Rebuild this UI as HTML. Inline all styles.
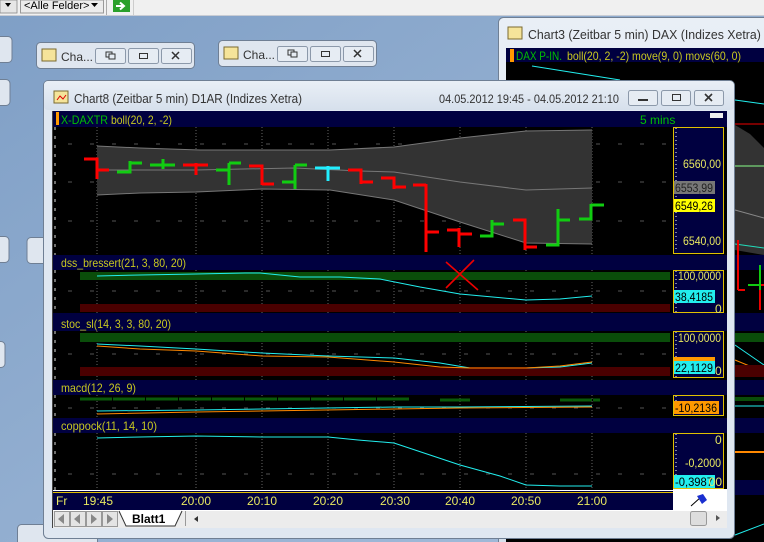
<!DOCTYPE html>
<html><head><meta charset="utf-8"><style>
html,body{margin:0;padding:0;width:764px;height:542px;overflow:hidden;background:#8eabcf}
svg{display:block}
text{font-family:"Liberation Sans",sans-serif}
</style></head><body>
<svg width="764" height="542" viewBox="0 0 764 542" xmlns="http://www.w3.org/2000/svg">
<defs>
<linearGradient id="desk" x1="0" y1="0" x2="1" y2="1"><stop offset="0" stop-color="#7f9fc6"/><stop offset="1" stop-color="#a6bedb"/></linearGradient>
<linearGradient id="tb" x1="0" y1="0" x2="0" y2="1"><stop offset="0" stop-color="#e9eff6"/><stop offset="1" stop-color="#d6e0ec"/></linearGradient>
</defs>
<rect width="764" height="542" fill="url(#desk)"/>
<rect x="0" y="0" width="764" height="15" fill="#f0f0f0"/>
<rect x="0" y="15" width="764" height="1" fill="#c8ccd4"/>
<rect x="0" y="0" width="17" height="13" fill="#e6e6e6" stroke="#888" stroke-width="0.8"/>
<path d="M5 3 l6 0 l-3 4z" fill="#000"/>
<rect x="20.5" y="0" width="83" height="13" fill="#ececec" stroke="#999"/>
<text x="24" y="9" font-size="11" fill="#000">&lt;Alle Felder&gt;</text>
<path d="M91 3 l7 0 l-3.5 4z" fill="#000"/>
<rect x="106" y="0" width="1" height="15" fill="#aaa"/>
<rect x="113" y="0" width="17" height="12" fill="#2aa02a"/>
<path d="M116 6 h7 M120 2.5 l4 3.5 l-4 3.5" stroke="#fff" stroke-width="2" fill="none"/>
<rect x="133" y="0" width="1" height="15" fill="#ccc"/>

<g fill="#dfe6ef" stroke="#6f7f94">
<rect x="-5" y="36.5" width="17" height="26" rx="4"/>
<rect x="-5" y="79.5" width="15" height="26" rx="4"/>
<rect x="-5" y="236.5" width="14" height="26" rx="4"/>
<rect x="-5" y="341.5" width="10" height="26" rx="4"/>
<rect x="27" y="237.5" width="20" height="26" rx="4"/>
<rect x="17.5" y="524.5" width="80" height="26" rx="4"/>
</g>
<g>
<rect x="36.5" y="42.5" width="158" height="26" rx="4" fill="#dfe6ef" stroke="#6f7f94"/>
<rect x="42" y="49" width="14" height="12" fill="#f5e49a" stroke="#7a6a30"/>
<text x="61" y="61" font-size="12" fill="#333">Cha...</text>
<rect x="95.5" y="48.5" width="30" height="15" rx="2" fill="#e6ecf3" stroke="#8c99aa"/>
<rect x="128.5" y="48.5" width="30" height="15" rx="2" fill="#e6ecf3" stroke="#8c99aa"/>
<rect x="161.5" y="48.5" width="30" height="15" rx="2" fill="#e6ecf3" stroke="#8c99aa"/>
<rect x="106" y="52" width="6" height="5" fill="none" stroke="#333"/><rect x="109" y="54" width="6" height="5" fill="#e6ecf3" stroke="#333"/>
<rect x="139.5" y="53.5" width="8" height="5" fill="none" stroke="#333"/>
<path d="M172 52 l7 7 M179 52 l-7 7" stroke="#333" stroke-width="1.5"/>
</g>
<g>
<rect x="218.5" y="40.5" width="158" height="26" rx="4" fill="#dfe6ef" stroke="#6f7f94"/>
<rect x="224" y="47" width="14" height="12" fill="#f5e49a" stroke="#7a6a30"/>
<text x="243" y="59" font-size="12" fill="#333">Cha...</text>
<rect x="277.5" y="46.5" width="30" height="15" rx="2" fill="#e6ecf3" stroke="#8c99aa"/>
<rect x="310.5" y="46.5" width="30" height="15" rx="2" fill="#e6ecf3" stroke="#8c99aa"/>
<rect x="343.5" y="46.5" width="30" height="15" rx="2" fill="#e6ecf3" stroke="#8c99aa"/>
<rect x="288" y="50" width="6" height="5" fill="none" stroke="#333"/><rect x="291" y="52" width="6" height="5" fill="#e6ecf3" stroke="#333"/>
<rect x="321.5" y="51.5" width="8" height="5" fill="none" stroke="#333"/>
<path d="M354 50 l7 7 M361 50 l-7 7" stroke="#333" stroke-width="1.5"/>
</g>

<rect x="498.5" y="17.5" width="270" height="530" rx="5" fill="url(#tb)" stroke="#6f7f94"/>
<rect x="508" y="27" width="14" height="12" fill="#f5e49a" stroke="#7a6a30"/>
<text x="528" y="39" font-size="12.5" fill="#333" textLength="250" lengthAdjust="spacingAndGlyphs">Chart3 (Zeitbar 5 min)  DAX (Indizes Xetra) 04</text>
<rect x="506" y="48" width="258" height="494" fill="#000"/>
<rect x="506" y="48" width="258" height="14" fill="#000040"/>
<rect x="510" y="49" width="4" height="13" fill="#f90"/>
<text x="516" y="60" font-size="12" fill="#00c000" textLength="46" lengthAdjust="spacingAndGlyphs">DAX P-IN.</text>
<text x="567" y="60" font-size="12" fill="#c8c820" textLength="174" lengthAdjust="spacingAndGlyphs">boll(20, 2, -2) move(9, 0) movs(60, 0)</text>
<path d="M532 66 L620 80" stroke="#2ee" stroke-width="1"/>
<rect x="735" y="80" width="29" height="462" fill="#000"/>
<path d="M735 100 L764 104" stroke="#2ee"/>
<path d="M735 124 H764" stroke="#e00"/>
<path d="M735 125 L750 134 L764 148 V255 L735 250Z" fill="#333"/>
<path d="M735 166 H764" stroke="#8f8"/>
<path d="M735 210 L764 218" stroke="#888"/>
<path d="M735 244 L764 248" stroke="#2db"/>
<rect x="735" y="255" width="29" height="15" fill="#000040"/>
<path d="M738 240 V290 M738 290 H745 M760 270 V310 M752 285 H764" stroke="#e00" stroke-width="2"/>
<path d="M760 265 V290 M748 285 H760" stroke="#1c1" stroke-width="2"/>
<rect x="735" y="313" width="29" height="18" fill="#000040"/>
<rect x="735" y="333" width="29" height="9" fill="#0a4d0a"/>
<path d="M735 345 L764 365" stroke="#2ee"/><path d="M735 360 L764 372" stroke="#f80"/>
<rect x="735" y="365" width="29" height="12" fill="#4a0000"/>
<rect x="735" y="380" width="29" height="15" fill="#000040"/>
<rect x="735" y="397" width="29" height="4" fill="#0a4d0a"/>
<path d="M735 406 H764" stroke="#2ee"/>
<rect x="735" y="418" width="29" height="15" fill="#000040"/>
<path d="M735 452 H764" stroke="#f80" stroke-width="2"/>
<rect x="735" y="480" width="29" height="15" fill="#000040"/>
<path d="M735 535 L764 524" stroke="#2ee"/>

<rect x="43.5" y="80.5" width="691" height="458" rx="5" fill="#dfe7f1" stroke="#6f7f94"/>
<rect x="44" y="81" width="690" height="29" rx="4" fill="url(#tb)"/>
<rect x="54" y="91" width="14" height="12" fill="#f5e49a" stroke="#7a6a30"/>
<path d="M57 100 l3-4 l3 3 l3-4" stroke="#d00" fill="none"/>
<text x="74" y="103" font-size="12.5" fill="#333" textLength="228" lengthAdjust="spacingAndGlyphs">Chart8 (Zeitbar 5 min)  D1AR (Indizes Xetra)</text>
<text x="439" y="103" font-size="12" fill="#333" textLength="180" lengthAdjust="spacingAndGlyphs">04.05.2012 19:45 - 04.05.2012 21:10</text>
<rect x="628.5" y="90.5" width="29" height="15" rx="2" fill="#e6ecf3" stroke="#8c99aa"/>
<rect x="661.5" y="90.5" width="29" height="15" rx="2" fill="#e6ecf3" stroke="#8c99aa"/>
<rect x="694.5" y="90.5" width="29" height="15" rx="2" fill="#e6ecf3" stroke="#8c99aa"/>
<rect x="638" y="99" width="10" height="2" fill="#333"/>
<rect x="672.5" y="94.5" width="8" height="6" fill="none" stroke="#333"/>
<path d="M705 94 l7 7 M712 94 l-7 7" stroke="#333" stroke-width="1.6"/>

<rect x="52" y="111" width="675" height="417" fill="#000"/>
<rect x="52" y="111" width="1" height="417" fill="#444"/>
<rect x="53" y="111" width="674" height="16" fill="#000040"/>
<rect x="56" y="112" width="3" height="13" fill="#f90"/>
<text x="61" y="124" font-size="12" fill="#00c000" textLength="47" lengthAdjust="spacingAndGlyphs">X-DAXTR</text>
<text x="111" y="124" font-size="12" fill="#c8c820" textLength="61" lengthAdjust="spacingAndGlyphs">boll(20, 2, -2)</text>
<text x="640" y="124" font-size="12" fill="#00c000">5 mins</text>
<rect x="710" y="113" width="13" height="5" fill="#eee"/>
<rect x="53" y="255" width="674" height="15" fill="#000040"/>
<text x="61" y="267" font-size="12" fill="#c8c820" textLength="125" lengthAdjust="spacingAndGlyphs">dss_bressert(21, 3, 80, 20)</text>
<rect x="53" y="313" width="674" height="18" fill="#000040"/>
<text x="61" y="328" font-size="12" fill="#c8c820" textLength="110" lengthAdjust="spacingAndGlyphs">stoc_sl(14, 3, 3, 80, 20)</text>
<rect x="53" y="380" width="674" height="15" fill="#000040"/>
<text x="61" y="392" font-size="12" fill="#c8c820" textLength="75" lengthAdjust="spacingAndGlyphs">macd(12, 26, 9)</text>
<rect x="53" y="418" width="674" height="15" fill="#000040"/>
<text x="61" y="430" font-size="12" fill="#c8c820" textLength="96" lengthAdjust="spacingAndGlyphs">coppock(11, 14, 10)</text>

<g stroke="#666" stroke-dasharray="1,2">
<path d="M97 127V255 M196 127V255 M262 127V255 M328 127V255 M394 127V255 M460 127V255 M526 127V255 M592 127V255"/>
<path d="M97 270V313 M196 270V313 M262 270V313 M328 270V313 M394 270V313 M460 270V313 M526 270V313 M592 270V313"/>
<path d="M97 331V380 M196 331V380 M262 331V380 M328 331V380 M394 331V380 M460 331V380 M526 331V380 M592 331V380"/>
<path d="M97 395V418 M196 395V418 M262 395V418 M328 395V418 M394 395V418 M460 395V418 M526 395V418 M592 395V418"/>
<path d="M97 433V490 M196 433V490 M262 433V490 M328 433V490 M394 433V490 M460 433V490 M526 433V490 M592 433V490"/>
</g>
<g stroke="#555" stroke-dasharray="4,18">
<path d="M68 144H670 M68 182H670 M68 221H670 M68 291H670 M68 354H670 M68 408H670 M68 474H670"/>
</g>
<g stroke="#ddd" stroke-dasharray="3,6"><path d="M55 127V255 M55 270V313 M55 331V380 M55 395V418 M55 433V490"/></g>

<path d="M97 146 L140 148 L200 150 L330 150 L394 147 L460 138 L526 131 L592 130 L592 244 L526 243 L460 222 L394 200 L330 190 L262 189 L196 192 L140 193 L97 195Z" fill="#333"/>
<path d="M97 146 L140 148 L200 150 L330 150 L394 147 L460 138 L526 131 L592 130" stroke="#777" fill="none"/>
<path d="M97 195 L140 193 L196 192 L262 189 L330 190 L394 200 L460 222 L526 243 L592 244" stroke="#777" fill="none"/>
<path d="M97 170 L196 170 L294 168 L360 171 L394 172 L460 182 L526 190 L592 188" stroke="#777" fill="none"/>
<g stroke-width="3" fill="none">
<path d="M84 159H97V179 M97 170H109" stroke="#f00"/>
<path d="M117 172H130V161 M130 163H142" stroke="#1c1"/>
<path d="M150 165H175 M163 159V169" stroke="#1c1"/>
<path d="M183 165H208 M196 163V175" stroke="#f00"/>
<path d="M216 170H229 M229 163V185 M229 163H241" stroke="#1c1"/>
<path d="M249 166H262V185 M262 184H274" stroke="#f00"/>
<path d="M282 182H295 M295 165V189 M295 165H307" stroke="#1c1"/>
<path d="M315 168H340 M328 166V181" stroke="#2ef"/>
<path d="M348 170H361V184 M361 182H373" stroke="#f00"/>
<path d="M381 178H394V189 M394 187H406" stroke="#f00"/>
<path d="M413 185H426 M426 184V252 M426 232H439" stroke="#f00"/>
<path d="M447 230H460 M459 228V247 M460 234H472" stroke="#f00"/>
<path d="M480 236H492V220 M492 224H504" stroke="#1c1"/>
<path d="M513 220H525V250 M525 247H537" stroke="#f00"/>
<path d="M546 245H558V209 M558 220H570" stroke="#1c1"/>
<path d="M579 219H591V204 M591 205H604" stroke="#1c1"/>
</g>
<rect x="80" y="272" width="590" height="8" fill="#0a4d0a"/>
<rect x="80" y="304" width="590" height="8" fill="#4a0000"/>
<path d="M97 276 L140 275 L196 274 L245 273 L260 273 L300 277 L340 277 L380 279 L420 287 L460 294 L526 300 L560 299 L592 296" stroke="#2ee" fill="none"/>
<path d="M446 262 L478 290 M474 260 L446 288" stroke="#e00" stroke-width="1.6"/>
<rect x="80" y="333" width="590" height="9" fill="#0a4d0a"/>
<rect x="80" y="367" width="590" height="9" fill="#4a0000"/>
<path d="M97 344 L140 346 L196 349 L262 353 L328 356 L394 358 L440 363 L470 368 L526 368 L560 367 L592 363" stroke="#2ee" fill="none"/>
<path d="M97 346 L140 349 L196 351 L262 356 L328 357 L394 362 L440 367 L470 368 L526 368 L560 366 L592 362" stroke="#f80" fill="none"/>
<path d="M80 399H410 M440 400H470 M560 400H600" stroke="#0a5a0a" stroke-width="3" stroke-dasharray="32,1"/>
<path d="M97 411 L196 410 L262 409 L394 407 L460 407 L592 406" stroke="#2ee" fill="none"/>
<path d="M97 414 L196 412 L262 411 L394 409 L460 408 L592 407" stroke="#f80" fill="none"/>
<path d="M97 438 L140 437 L196 436 L262 437 L328 437 L358 440 L394 443 L430 455 L460 465 L500 476 L526 485 L560 486 L592 486" stroke="#2ee" fill="none"/>

<g fill="#000040" stroke="#e0c000">
<rect x="673.5" y="127.5" width="50" height="126"/>
<rect x="673.5" y="270.5" width="50" height="42"/>
<rect x="673.5" y="331.5" width="50" height="46"/>
<rect x="673.5" y="395.5" width="50" height="20"/>
<rect x="673.5" y="433.5" width="50" height="55"/>
</g>
<g stroke="#fff" stroke-dasharray="1,3"><path d="M676 128V252 M676 271V312 M676 332V377 M676 396V415 M676 434V488"/></g>
<g font-size="12" fill="#e8e860">
<text x="683" y="168" textLength="38" lengthAdjust="spacingAndGlyphs">6560,00</text>
<text x="683" y="245" textLength="38" lengthAdjust="spacingAndGlyphs">6540,00</text>
<text x="678" y="280" textLength="43" lengthAdjust="spacingAndGlyphs">100,0000</text>
<text x="715" y="313">0</text>
<text x="678" y="342" textLength="43" lengthAdjust="spacingAndGlyphs">100,0000</text>
<text x="715" y="375">0</text>
<text x="715" y="444">0</text>
<text x="685" y="467" textLength="36" lengthAdjust="spacingAndGlyphs">-0,2000</text>
</g>
<rect x="674" y="181" width="41" height="13" fill="#777"/>
<text x="675" y="192" font-size="12" fill="#222" textLength="38" lengthAdjust="spacingAndGlyphs">6553,99</text>
<rect x="674" y="199" width="41" height="13" fill="#ff0"/>
<text x="675" y="210" font-size="12" fill="#000" textLength="38" lengthAdjust="spacingAndGlyphs">6549,26</text>
<rect x="674" y="290" width="41" height="13" fill="#2ee"/>
<text x="675" y="301" font-size="12" fill="#000" textLength="38" lengthAdjust="spacingAndGlyphs">38,4185</text>
<rect x="674" y="357" width="41" height="5" fill="#f90"/>
<rect x="674" y="361" width="41" height="13" fill="#2ee"/>
<text x="675" y="372" font-size="12" fill="#000" textLength="38" lengthAdjust="spacingAndGlyphs">22,1129</text>
<rect x="674" y="401" width="45" height="13" fill="#f90"/>
<text x="675" y="412" font-size="12" fill="#000" textLength="42" lengthAdjust="spacingAndGlyphs">-10,2136</text>
<rect x="674" y="475" width="41" height="13" fill="#2ee"/>
<text x="675" y="486" font-size="12" fill="#000" textLength="38" lengthAdjust="spacingAndGlyphs">-0,3987</text>
<text x="722" y="486" font-size="12" fill="#e8e860" text-anchor="end">00</text>

<rect x="53" y="490" width="620" height="20" fill="#000040"/>
<rect x="53" y="490" width="620" height="1" fill="#fff"/>
<rect x="53" y="492" width="620" height="1" fill="#e0c000"/>
<g font-size="12" fill="#e8e860">
<text x="56" y="505">Fr</text>
<text x="83" y="505">19:45</text>
<text x="181" y="505">20:00</text>
<text x="247" y="505">20:10</text>
<text x="313" y="505">20:20</text>
<text x="380" y="505">20:30</text>
<text x="445" y="505">20:40</text>
<text x="511" y="505">20:50</text>
<text x="577" y="505">21:00</text>
</g>
<rect x="673" y="489" width="54" height="21" fill="#fff"/>
<path d="M691 506 L701 497" stroke="#000"/>
<path d="M697 496 L703 494 L707 500 L702 504Z" fill="#1a2fd0"/>
<rect x="53" y="510" width="674" height="18" fill="#ececec"/>
<rect x="53" y="510" width="674" height="1" fill="#fff"/>
<g fill="#e4e4e4" stroke="#999">
<rect x="54.5" y="511.5" width="15" height="15"/><rect x="70.5" y="511.5" width="15" height="15"/>
<rect x="86.5" y="511.5" width="15" height="15"/><rect x="102.5" y="511.5" width="15" height="15"/>
</g>
<g fill="#888"><path d="M58 519 l6-5v10z M74 519 l6-5v10z M91 514 l6 5-6 5z M107 514 l6 5-6 5z"/></g>
<path d="M119 511 L126 526 H175 L182 511" fill="#fff" stroke="#333"/>
<text x="132" y="523" font-size="12" font-weight="bold" fill="#000">Blatt1</text>
<rect x="185" y="511" width="1" height="15" fill="#999"/>
<path d="M194 519 l4-3v6z" fill="#333"/>
<rect x="690.5" y="511.5" width="16" height="14" rx="2" fill="#ddd" stroke="#999"/>
<path d="M716 515 l4 3-4 3z" fill="#555"/>
</svg>
</body></html>
